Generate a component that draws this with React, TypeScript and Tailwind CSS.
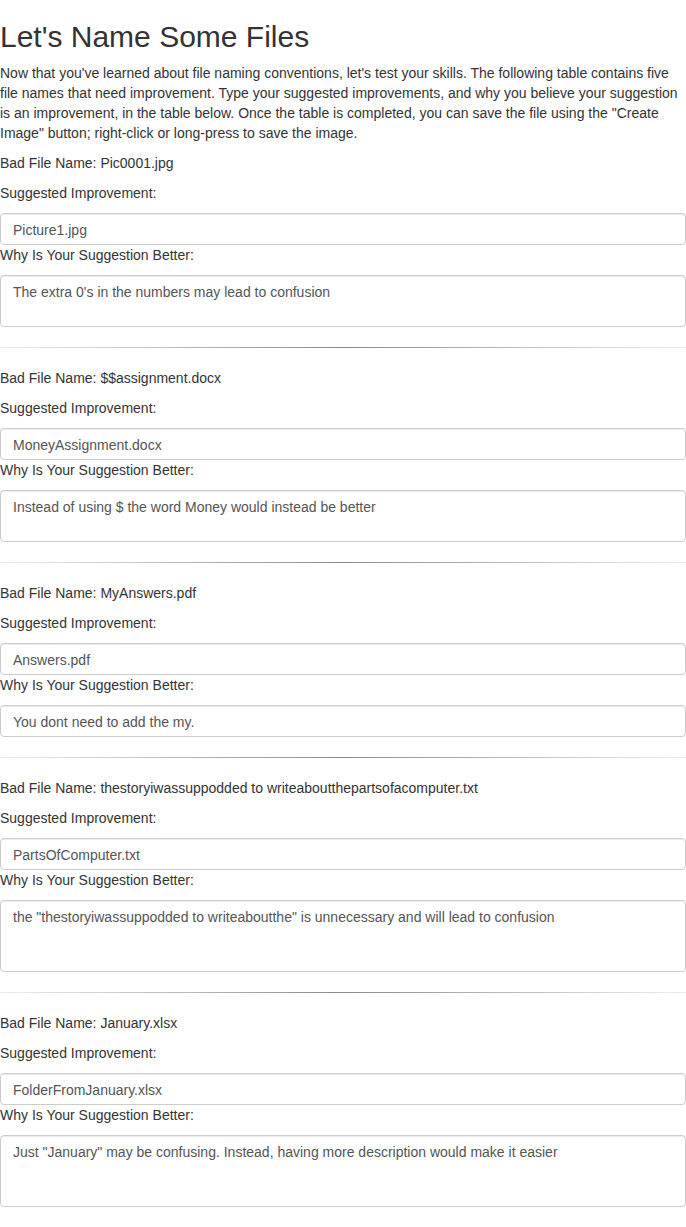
import React from "react";

const items = [
  {
    bad: "Pic0001.jpg",
    sug: "Picture1.jpg",
    why: "The extra 0's in the numbers may lead to confusion",
    h: "h-[52px]",
  },
  {
    bad: "$$assignment.docx",
    sug: "MoneyAssignment.docx",
    why: "Instead of using $ the word Money would instead be better",
    h: "h-[52px]",
  },
  {
    bad: "MyAnswers.pdf",
    sug: "Answers.pdf",
    why: "You dont need to add the my.",
    h: "h-[32px]",
  },
  {
    bad: "thestoryiwassuppodded to writeaboutthepartsofacomputer.txt",
    sug: "PartsOfComputer.txt",
    why: 'the "thestoryiwassuppodded to writeaboutthe" is unnecessary and will lead to confusion',
    h: "h-[72px]",
  },
  {
    bad: "January.xlsx",
    sug: "FolderFromJanuary.xlsx",
    why: 'Just "January" may be confusing. Instead, having more description would make it easier',
    h: "h-[72px]",
  },
];

export default function App() {
  return (
    <div className="w-[686px] bg-white text-[#333333] text-[14px] leading-[20px] font-['Liberation_Sans',Arial,sans-serif]">
      <h2 className="mt-[20px] mb-[10px] text-[30px] leading-[33px] font-normal">
        Let's Name Some Files
      </h2>
      <p className="mb-[10px]">
        Now that you've learned about file naming conventions, let's test your skills. The following table contains five
        file names that need improvement. Type your suggested improvements, and why you believe your suggestion is an
        improvement, in the table below. Once the table is completed, you can save the file using the "Create Image"
        button; right-click or long-press to save the image.
      </p>
      {items.map((it, i) => (
        <div key={i}>
          <p className="mb-[10px]">Bad File Name: {it.bad}</p>
          <p className="mb-[10px]">Suggested Improvement:</p>
          <div className="h-[32px] w-full rounded-[4px] border border-[#cccccc] shadow-[inset_0_1px_1px_rgba(0,0,0,0.075)] px-[12px] pt-[6px] text-[#555555]">
            {it.sug}
          </div>
          <p className="mb-[10px]">Why Is Your Suggestion Better:</p>
          <div
            className={`${it.h} w-full rounded-[4px] border border-[#cccccc] shadow-[inset_0_1px_1px_rgba(0,0,0,0.075)] px-[12px] pt-[6px] text-[#555555]`}
          >
            {it.why}
          </div>
          {i < items.length - 1 && (
            <div className="my-[20px] h-px w-full bg-[linear-gradient(to_right,#eeeeee,#8a8a8a,#eeeeee)]" />
          )}
        </div>
      ))}
      <div className="h-[21px]" />
    </div>
  );
}
